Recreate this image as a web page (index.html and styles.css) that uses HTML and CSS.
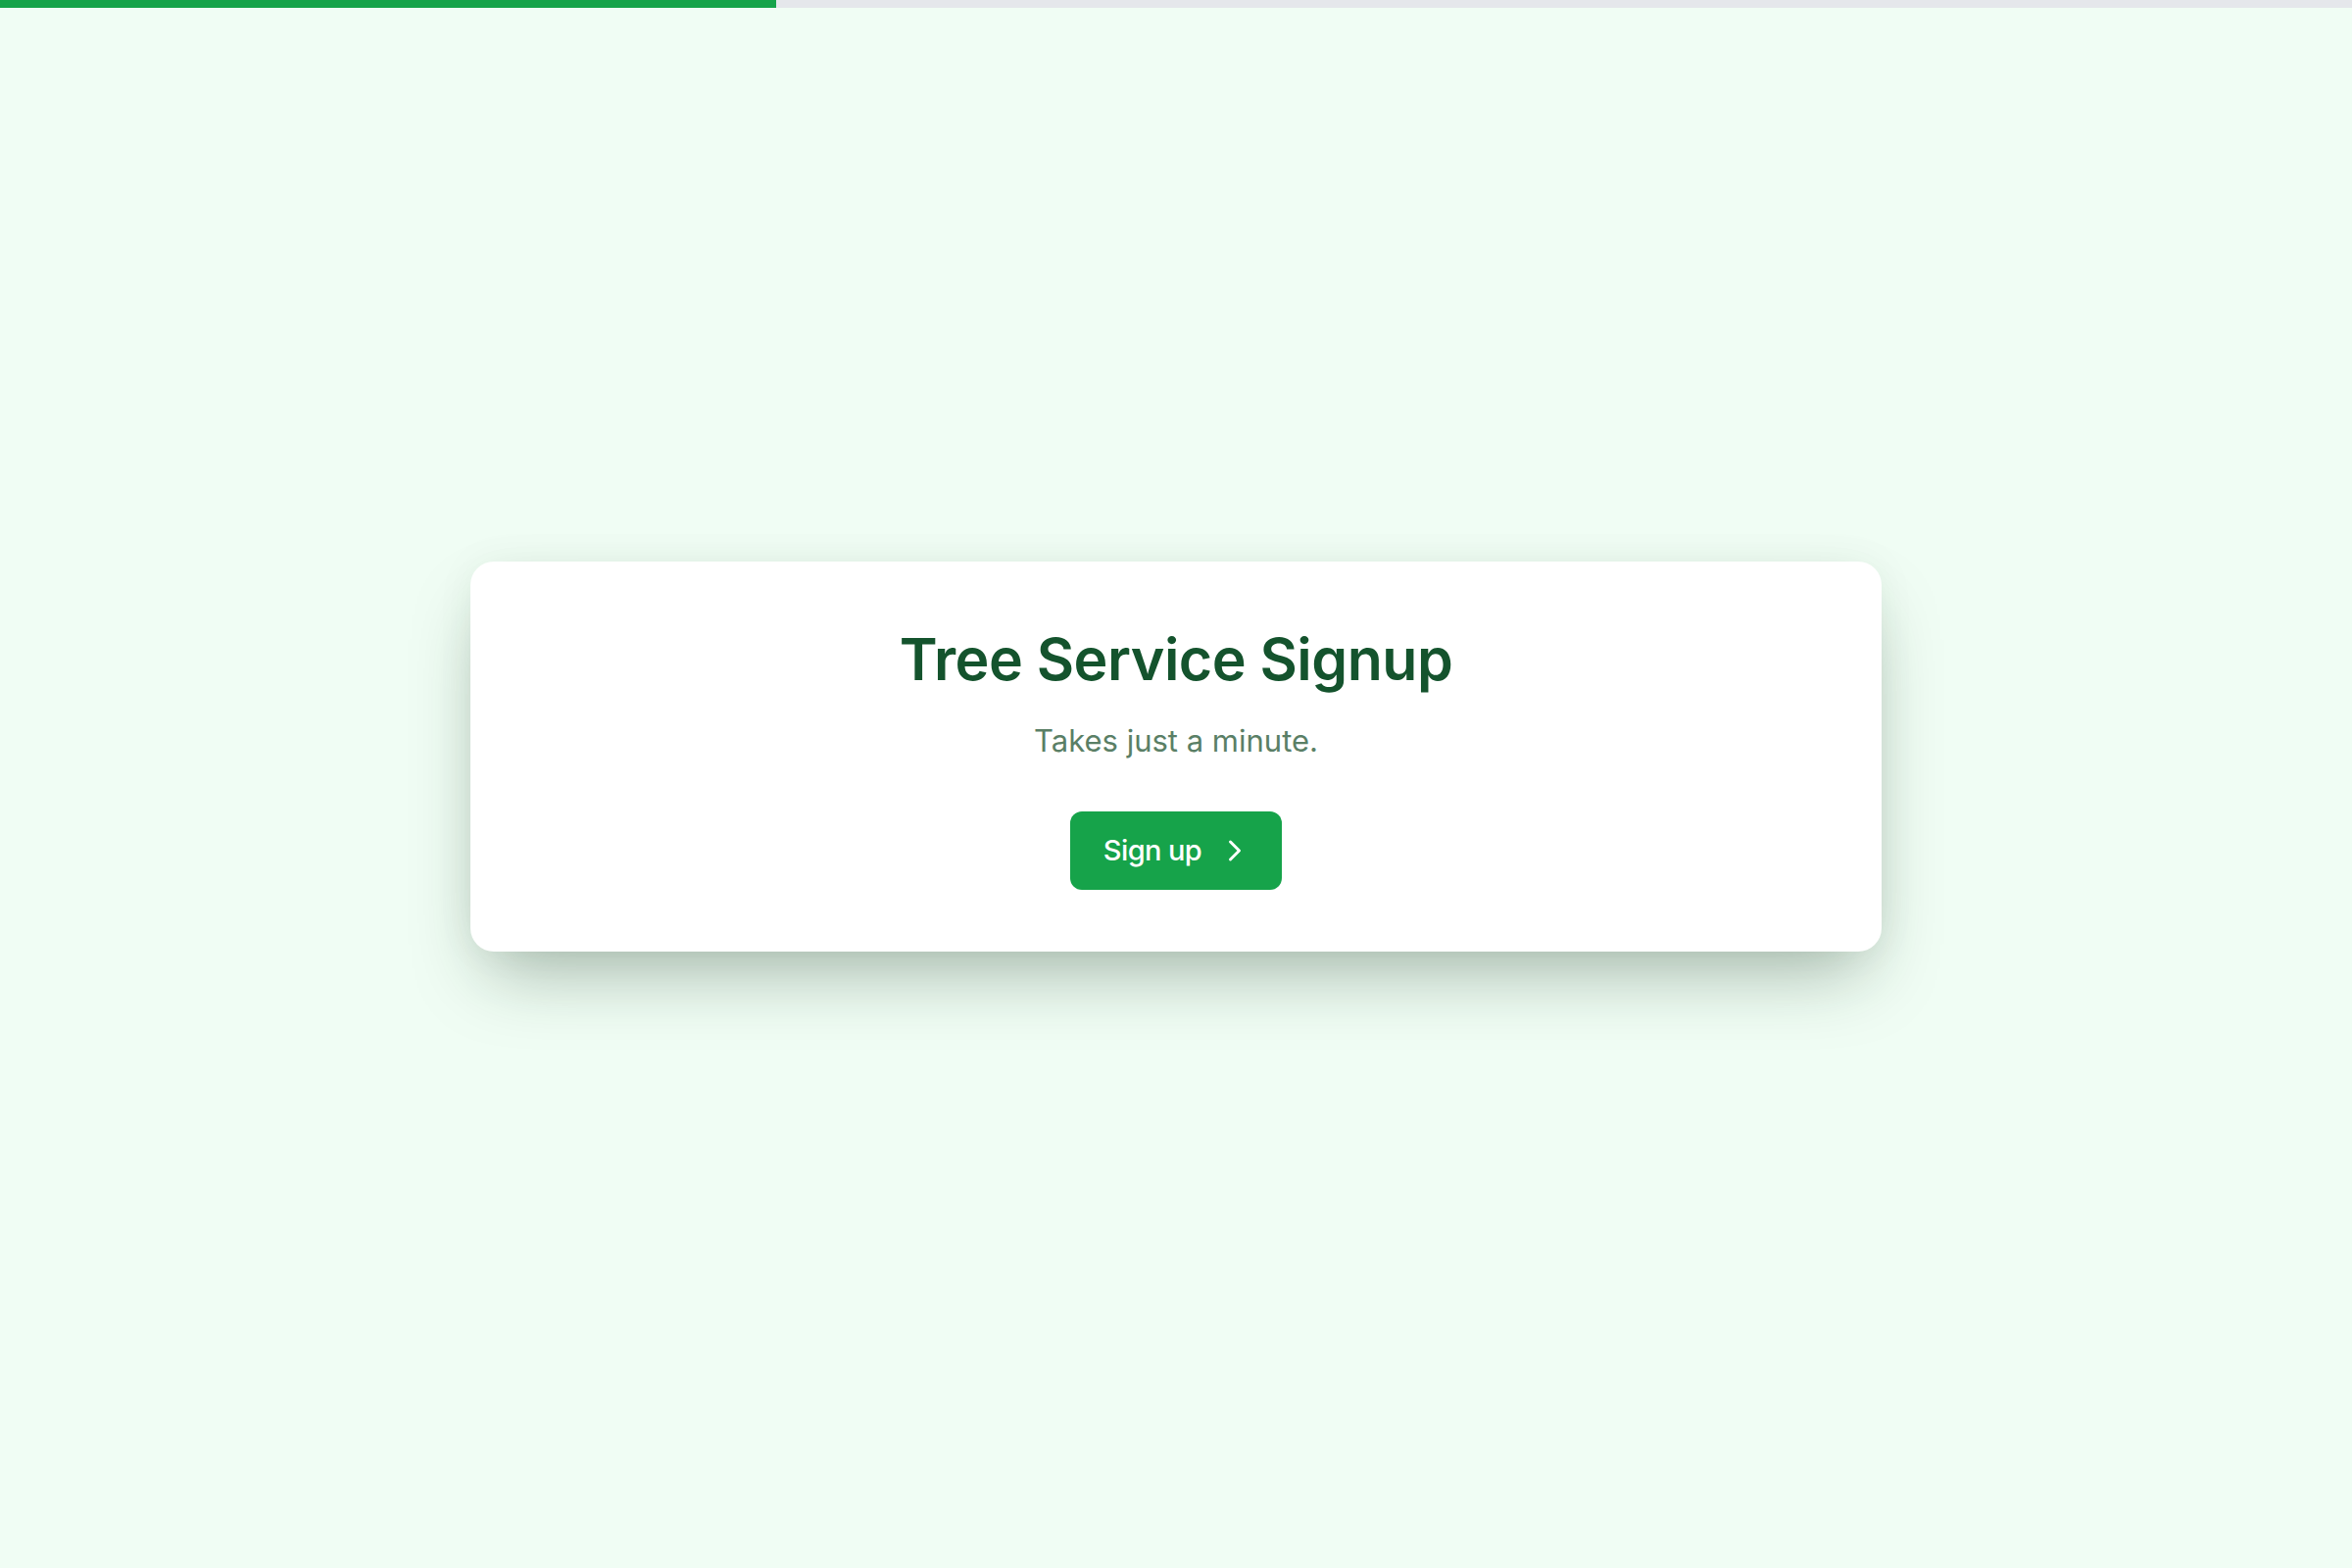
FILE: index.html
```html
<!DOCTYPE html>
<html lang="en">
<head>
<meta charset="utf-8">
<title>Tree Service Signup</title>
<link rel="stylesheet" href="styles.css">
</head>
<body>
<div class="progress"><div class="progress-fill" style="width:33%"></div></div>
<main class="stage">
  <section class="card">
    <h1 class="title">Tree Service Signup</h1>
    <p class="subtitle">Takes just a minute.</p>
    <button class="btn" type="button">
      <span class="btn-label">Sign up</span>
      <svg class="btn-icon" viewBox="0 0 24 24" fill="none" stroke="currentColor" stroke-width="2" stroke-linecap="round" stroke-linejoin="round" aria-hidden="true"><path d="m9 18 6-6-6-6"/></svg>
    </button>
  </section>
</main>
</body>
</html>
```
FILE: styles.css
```css
* { box-sizing: border-box; }
html, body { margin: 0; padding: 0; }
body {
  background: #f0fdf4;
  font-family: Inter, "Open Sans", "Liberation Sans", sans-serif;
  min-height: 1600px;
}
.progress {
  height: 8px;
  background: #e5e7eb;
  width: 100%;
}
.progress-fill {
  height: 100%;
  background: #16a34a;
}
.stage {
  min-height: 1592px;
  display: flex;
  align-items: center;
  justify-content: center;
  padding-bottom: 65px;
}
.card {
  width: 1440px;
  background: #ffffff;
  border-radius: 24px;
  box-shadow: 0 36px 75px -18px rgba(20, 50, 30, 0.35), 0 0 40px rgba(20, 80, 40, 0.05);
  padding: 64px 48px 63px;
  display: flex;
  flex-direction: column;
  align-items: center;
  text-align: center;
}
.title {
  margin: 0 0 26px;
  font-size: 59px;
  line-height: 72px;
  font-weight: 600;
  letter-spacing: -0.5px;
  color: #14532d;
}
.subtitle {
  margin: 0 0 51px;
  font-size: 31px;
  line-height: 42px;
  font-weight: 400;
  letter-spacing: 0;
  color: #5a7f66;
}
.btn {
  display: inline-flex;
  align-items: center;
  gap: 16px;
  height: 80px;
  padding: 0 30px 0 34px;
  border: none;
  border-radius: 12px;
  background: #16a34a;
  color: #ffffff;
  font-family: inherit;
  font-size: 29px;
  font-weight: 500;
  letter-spacing: -0.6px;
  cursor: pointer;
}
.btn-icon {
  width: 36px;
  height: 36px;
}
```
